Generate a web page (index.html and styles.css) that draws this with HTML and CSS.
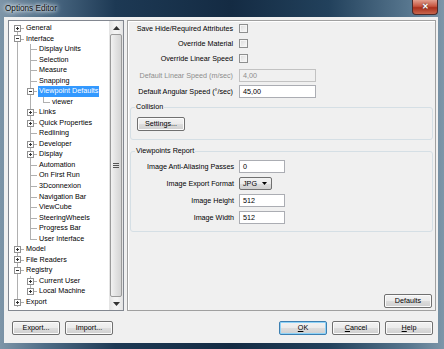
FILE: index.html
```html
<!DOCTYPE html>
<html lang="en">
<head>
  <meta charset="UTF-8" />
  <title>Options Editor</title>
  <link rel="stylesheet" href="styles.css">
</head>
<body>
  <div class="window">
    <!-- Title bar -->
    <div class="titlebar">
      <span class="title">Options Editor</span>
      <span class="close">✕</span>
    </div>

    <div class="client">
      <div class="main">
        <!-- Tree -->
        <div class="tree">
          <div class="nodes">
            <div class="node"><i class="c f"><b class="exp plus"></b></i><span>General</span></div>
            <div class="node"><i class="c t"><b class="exp"></b></i><span>Interface</span></div>
            <div class="node"><i class="c v"></i><i class="c t"></i><span>Display Units</span></div>
            <div class="node"><i class="c v"></i><i class="c t"></i><span>Selection</span></div>
            <div class="node"><i class="c v"></i><i class="c t"></i><span>Measure</span></div>
            <div class="node"><i class="c v"></i><i class="c t"></i><span>Snapping</span></div>
            <div class="node sel"><i class="c v"></i><i class="c t"><b class="exp"></b></i><span>Viewpoint Defaults</span></div>
            <div class="node"><i class="c v"></i><i class="c v"></i><i class="c l"></i><span>viewer</span></div>
            <div class="node"><i class="c v"></i><i class="c t"><b class="exp plus"></b></i><span>Links</span></div>
            <div class="node"><i class="c v"></i><i class="c t"><b class="exp plus"></b></i><span>Quick Properties</span></div>
            <div class="node"><i class="c v"></i><i class="c t"></i><span>Redlining</span></div>
            <div class="node"><i class="c v"></i><i class="c t"><b class="exp plus"></b></i><span>Developer</span></div>
            <div class="node"><i class="c v"></i><i class="c t"><b class="exp plus"></b></i><span>Display</span></div>
            <div class="node"><i class="c v"></i><i class="c t"></i><span>Automation</span></div>
            <div class="node"><i class="c v"></i><i class="c t"></i><span>On First Run</span></div>
            <div class="node"><i class="c v"></i><i class="c t"></i><span>3Dconnexion</span></div>
            <div class="node"><i class="c v"></i><i class="c t"></i><span>Navigation Bar</span></div>
            <div class="node"><i class="c v"></i><i class="c t"></i><span>ViewCube</span></div>
            <div class="node"><i class="c v"></i><i class="c t"></i><span>SteeringWheels</span></div>
            <div class="node"><i class="c v"></i><i class="c t"></i><span>Progress Bar</span></div>
            <div class="node"><i class="c v"></i><i class="c l"></i><span>User Interface</span></div>
            <div class="node"><i class="c t"><b class="exp plus"></b></i><span>Model</span></div>
            <div class="node"><i class="c t"><b class="exp plus"></b></i><span>File Readers</span></div>
            <div class="node"><i class="c t"><b class="exp"></b></i><span>Registry</span></div>
            <div class="node"><i class="c v"></i><i class="c t"><b class="exp plus"></b></i><span>Current User</span></div>
            <div class="node"><i class="c v"></i><i class="c l"><b class="exp plus"></b></i><span>Local Machine</span></div>
            <div class="node"><i class="c t"><b class="exp plus"></b></i><span>Export</span></div>
          </div>
          <div class="sb">
            <div class="arrow"><svg width="7" height="4" viewBox="0 0 7 4"><polygon points="0,4 7,4 3.5,0" fill="#333"/></svg></div>
            <div class="thumb"><span class="grip"></span></div>
            <div class="arrow"><svg width="7" height="4" viewBox="0 0 7 4"><polygon points="0,0 7,0 3.5,4" fill="#333"/></svg></div>
          </div>
        </div>

        <!-- Settings panel -->
        <div class="panel">
          <div class="fields">
            <div class="row"><label>Save Hide/Required Attributes</label><span class="chk"></span></div>
            <div class="row"><label>Override Material</label><span class="chk"></span></div>
            <div class="row"><label>Override Linear Speed</label><span class="chk"></span></div>
            <div class="row tb"><label class="dis">Default Linear Speed (m/sec)</label><span class="txt wide dis">4,00</span></div>
            <div class="row tb"><label>Default Angular Speed (°/sec)</label><span class="txt wide">45,00</span></div>
          </div>

          <fieldset class="group collision">
            <legend>Collision</legend>
            <button class="btn">Settings...</button>
          </fieldset>

          <fieldset class="group report">
            <legend>Viewpoints Report</legend>
            <div class="row"><label>Image Anti-Aliasing Passes</label><span class="txt">0</span></div>
            <div class="row"><label>Image Export Format</label><span class="combo">JPG<svg width="5" height="3" viewBox="0 0 5 3"><polygon points="0,0 5,0 2.5,3" fill="#000"/></svg></span></div>
            <div class="row"><label>Image Height</label><span class="txt">512</span></div>
            <div class="row"><label>Image Width</label><span class="txt">512</span></div>
          </fieldset>

          <div class="panel-foot"><button class="btn">Defaults</button></div>
        </div>
      </div>

      <!-- Dialog buttons -->
      <div class="footer">
        <button class="btn">Export...</button>
        <button class="btn">Import...</button>
        <span class="spacer"></span>
        <button class="btn default"><u>O</u>K</button>
        <button class="btn"><u>C</u>ancel</button>
        <button class="btn"><u>H</u>elp</button>
      </div>
    </div>
  </div>
</body>
</html>
```

FILE: styles.css
```css
:root{
  --ln:#b0b0b0;          /* tree lines */
  --face:#f0f0f0;        /* dialog face */
}
*{box-sizing:border-box;margin:0;padding:0}
html,body{width:444px;height:349px;overflow:hidden}
body{
  font:7.2px/1 "Liberation Sans",Arial,sans-serif;
  color:#000;
  background:#1c344c;
}

/* ── Window frame ─────────────────────────────── */
.window{
  height:349px;
  display:flex;
  flex-direction:column;
  background:linear-gradient(90deg,#7d95a8 0,#4f6d87 10%,#1d3954 26%,#142b43 52%,#22415c 74%,#57768e 92%,#7d96a9 100%);
}
.titlebar{
  height:17px;
  flex:none;
  display:flex;
  align-items:flex-start;
  justify-content:space-between;
}
.title{
  font-size:8.2px;
  margin:5px 0 0 5px;
  color:#111;
  text-shadow:0 0 3px #e8eef3,0 0 5px #e8eef3,0 0 7px #dfe7ee;
}
.close{
  width:26px;height:15px;
  margin-right:6px;
  display:flex;align-items:center;justify-content:center;
  background:linear-gradient(#e3a08f,#c6553f 45%,#a9301c 55%,#c8664d);
  border:1px solid #4a2a2a;border-top:none;
  border-radius:0 0 4px 4px;
  color:#fff;font-size:8px;font-weight:bold;
  text-shadow:0 0 2px #333;
}
.client{
  flex:1;
  margin:0 6px 6px 4px;
  background:var(--face);
  display:flex;
  flex-direction:column;
  padding:3px 2px 0 4px;
}
.main{flex:1;display:flex;gap:3px}

/* ── Tree view ───────────────────────────────── */
.tree{
  width:116px;flex:none;
  border:1px solid #828790;
  background:#fff;
  display:flex;
}
.nodes{flex:1;padding:2px 0 0 2px;overflow:hidden}
.node{height:10.54px;display:flex;white-space:nowrap}
.node span{line-height:10.54px;margin-left:1px;padding:0 1px}
.node.sel span{background:#3399ff;color:#fff}
.c{width:13px;flex:none;display:flex;align-items:center}
.v{background:linear-gradient(var(--ln),var(--ln)) 6px 0/1px 100% no-repeat}
.t{background:linear-gradient(var(--ln),var(--ln)) 6px 0/1px 100% no-repeat,
             linear-gradient(var(--ln),var(--ln)) 6px 5px/7px 1px no-repeat}
.l{background:linear-gradient(var(--ln),var(--ln)) 6px 0/1px 5px no-repeat,
             linear-gradient(var(--ln),var(--ln)) 6px 5px/7px 1px no-repeat}
.f{background:linear-gradient(var(--ln),var(--ln)) 6px 5px/1px 100% no-repeat,
             linear-gradient(var(--ln),var(--ln)) 6px 5px/7px 1px no-repeat}
.exp{
  width:7px;height:7px;margin-left:3px;
  border:1px solid #919191;
  background:linear-gradient(#333,#333) 1px 2px/3px 1px no-repeat,#fff;
}
.exp.plus{
  background:linear-gradient(#333,#333) 1px 2px/3px 1px no-repeat,
             linear-gradient(#333,#333) 2px 1px/1px 3px no-repeat,#fff;
}

/* scrollbar */
.sb{
  width:14px;flex:none;
  display:flex;flex-direction:column;
  background:linear-gradient(90deg,#e3e3e3,#f3f3f3 40%,#f3f3f3 60%,#e3e3e3);
}
.arrow{height:13px;display:flex;align-items:center;justify-content:center}
.thumb{
  flex:1;margin:0 1px;
  border:1px solid #9a9a9a;border-radius:2px;
  background:linear-gradient(90deg,#f2f2f2,#e2e2e2 50%,#d4d4d4);
  display:flex;align-items:center;justify-content:center;
}
.grip{
  width:6px;height:5px;
  background:repeating-linear-gradient(#555 0 1px,transparent 1px 2px);
}

/* ── Settings panel ──────────────────────────── */
.panel{
  flex:1;
  border:1px solid #a0a0a0;
  box-shadow:inset 1px 1px 0 #fff;
  display:flex;
  flex-direction:column;
}
.row{display:flex;align-items:center;height:15px}
.row label{width:111px;padding-right:6px;text-align:right;flex:none}
.row.tb{height:13px;margin-top:3px}
.dis{color:#8d8d8d}
.chk{
  width:9px;height:9px;
  border:1px solid #8e8f8f;
  background:linear-gradient(135deg,#dadada,#fbfbfb);
  box-shadow:inset 0 0 0 1px #f5f5f5;
}
.txt{
  width:46px;height:13px;
  border:1px solid #abadb3;
  background:#fff;
  padding:0 3px;
  display:flex;align-items:center;
}
.txt.wide{width:77px}
.txt.dis{background:var(--face);border-color:#c2c2c2}

.group{
  margin:4px 2px 0;
  border:1px solid #d5dfe5;
  border-radius:3px;
}
.group legend{margin-left:4px;padding:0 1px;line-height:10px}
.collision{padding:5px 6px 8px}
.collision legend{margin-left:-2px}
.report{padding:2px 0 5px;margin-top:6px}
.report .row{height:17px}
.report .row label{width:108px;padding-right:5px}
.combo{
  width:33px;height:13px;
  border:1px solid #707070;border-radius:2px;
  background:linear-gradient(#f2f2f2 0,#ebebeb 50%,#dddddd 51%,#cfcfcf);
  display:flex;align-items:center;justify-content:space-between;
  padding:0 4px 0 3px;
}
.panel-foot{margin-top:auto;display:flex;justify-content:flex-end;padding:0 3px 2px 0}

/* ── Buttons ─────────────────────────────────── */
.btn{
  font:inherit;color:#000;
  width:48px;height:14px;
  border:1px solid #707070;border-radius:2px;
  background:linear-gradient(#f2f2f2 0,#ebebeb 50%,#dddddd 51%,#cfcfcf);
  box-shadow:inset 0 0 0 1px #fbfbfb;
}
.btn.default{border-color:#3c7fb1;box-shadow:inset 0 0 0 1px #8fd3f8}
.btn u{text-decoration:underline}
.footer{
  height:32px;flex:none;
  display:flex;align-items:flex-start;
  gap:5px;
  padding:10px 3px 0 4px;
}
.footer .spacer{flex:1}
```
